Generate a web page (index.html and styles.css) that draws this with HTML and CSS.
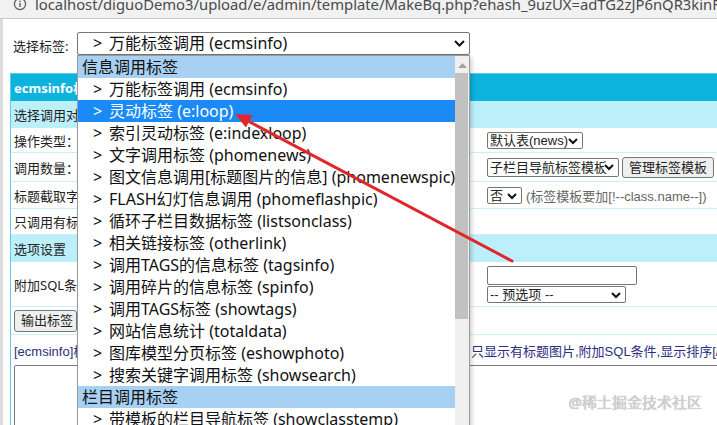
FILE: index.html
```html
<!DOCTYPE html>
<html lang="zh-CN">
<head>
    <meta charset="UTF-8">
    <title>MakeBq</title>
    <link rel="stylesheet" href="styles.css">
</head>
<body>
    <!-- barra de direcciones -->
    <div class="urlbar">
        <svg class="info" width="14" height="14" viewBox="0 0 14 14">
            <circle cx="7" cy="7" r="5.6" fill="none" stroke="#5f5f5f" stroke-width="1.3"/>
            <rect x="6.3" y="6" width="1.4" height="4" fill="#5f5f5f"/>
            <rect x="6.3" y="3.6" width="1.4" height="1.4" fill="#5f5f5f"/>
        </svg>
        <span class="url">localhost/diguoDemo3/upload/e/admin/template/MakeBq.php?ehash_9uzUX=adTG2zJP6nQR3kinF99</span>
    </div>

    <div class="page">
        <div class="picker">
            <span class="picker-label">选择标签:</span>
            <div class="select-wrap">
                <div class="select big">
                    <span class="gt">&gt;</span>万能标签调用 (ecmsinfo)
                    <svg class="chev" width="11" height="7" viewBox="0 0 11 7"><path d="M1 1l4.5 4.5L10 1" fill="none" stroke="#111" stroke-width="2"/></svg>
                </div>

                <!-- lista desplegada -->
                <div class="dropdown">
                    <div class="options">
                        <div class="group">信息调用标签</div>
                        <div class="opt"><span class="gt">&gt;</span>万能标签调用 (ecmsinfo)</div>
                        <div class="opt active"><span class="gt">&gt;</span>灵动标签 (e:loop)</div>
                        <div class="opt"><span class="gt">&gt;</span>索引灵动标签 (e:indexloop)</div>
                        <div class="opt"><span class="gt">&gt;</span>文字调用标签 (phomenews)</div>
                        <div class="opt"><span class="gt">&gt;</span>图文信息调用[标题图片的信息] (phomenewspic)</div>
                        <div class="opt"><span class="gt">&gt;</span>FLASH幻灯信息调用 (phomeflashpic)</div>
                        <div class="opt"><span class="gt">&gt;</span>循环子栏目数据标签 (listsonclass)</div>
                        <div class="opt"><span class="gt">&gt;</span>相关链接标签 (otherlink)</div>
                        <div class="opt"><span class="gt">&gt;</span>调用TAGS的信息标签 (tagsinfo)</div>
                        <div class="opt"><span class="gt">&gt;</span>调用碎片的信息标签 (spinfo)</div>
                        <div class="opt"><span class="gt">&gt;</span>调用TAGS标签 (showtags)</div>
                        <div class="opt"><span class="gt">&gt;</span>网站信息统计 (totaldata)</div>
                        <div class="opt"><span class="gt">&gt;</span>图库模型分页标签 (eshowphoto)</div>
                        <div class="opt"><span class="gt">&gt;</span>搜索关键字调用标签 (showsearch)</div>
                        <div class="group">栏目调用标签</div>
                        <div class="opt"><span class="gt">&gt;</span>带模板的栏目导航标签 (showclasstemp)</div>
                    </div>
                    <div class="scrollbar">
                        <svg class="up" width="9" height="5" viewBox="0 0 9 5"><path d="M0 5L4.5 0L9 5z" fill="#a3a3a3"/></svg>
                        <div class="thumb"></div>
                    </div>
                </div>
            </div>
        </div>

        <!-- tabla del formulario -->
        <div class="panel">
            <div class="row head"><div class="cell-l">ecmsinfo标签生成</div></div>
            <div class="row light"><div class="cell-l">选择调用对象</div></div>
            <div class="row r-type">
                <div class="cell-l">操作类型：</div>
                <div class="cell-r"><div class="select w-news">默认表(news)<svg class="chev-s" width="10" height="7" viewBox="0 0 10 7"><path d="M1 1l4 4 4-4" fill="none" stroke="#111" stroke-width="2"/></svg></div></div>
            </div>
            <div class="row r-num">
                <div class="cell-l">调用数量：</div>
                <div class="cell-r">
                    <div class="select w-temp">子栏目导航标签模板<svg class="chev-s" width="10" height="7" viewBox="0 0 10 7"><path d="M1 1l4 4 4-4" fill="none" stroke="#111" stroke-width="2"/></svg></div>
                    <button class="btn">管理标签模板</button>
                </div>
            </div>
            <div class="row r-title">
                <div class="cell-l">标题截取字数：</div>
                <div class="cell-r">
                    <div class="select w-no">否<svg class="chev-s" width="10" height="7" viewBox="0 0 10 7"><path d="M1 1l4 4 4-4" fill="none" stroke="#111" stroke-width="2"/></svg></div>
                    <span class="hint">(标签模板要加[!--class.name--])</span>
                </div>
            </div>
            <div class="row r-pic"><div class="cell-l">只调用有标题图片：</div></div>
            <div class="row light r-opt"><div class="cell-l">选项设置</div></div>
            <div class="row r-sql">
                <div class="cell-l">附加SQL条件：</div>
                <div class="cell-r stack">
                    <div class="input"></div>
                    <div class="select w-pre">-- 预选项 --<svg class="chev-s" width="10" height="7" viewBox="0 0 10 7"><path d="M1 1l4 4 4-4" fill="none" stroke="#111" stroke-width="2"/></svg></div>
                </div>
            </div>
            <div class="row r-out"><div class="cell-l"><button class="btn">输出标签</button></div></div>
            <div class="row r-code">
                <div class="code"><span class="code-hidden">[ecmsinfo]栏目ID/专题ID,显示条数,标题截取数,是否显示栏目名,操作类型,</span>只显示有标题图片,附加SQL条件,显示排序[/ecmsinfo]</div>
            </div>
            <div class="row r-area"><div class="textarea"></div></div>
        </div>
    </div>

    <!-- flecha roja -->
    <svg class="arrow" width="717" height="425" viewBox="0 0 717 425">
        <line x1="512" y1="261" x2="246" y2="120" stroke="#e0282c" stroke-width="3" stroke-linecap="round"/>
        <path d="M235 114L252.6 114.9L245.9 127.5z" fill="#e0282c"/>
    </svg>

    <div class="watermark">@稀土掘金技术社区</div>
</body>
</html>
```

FILE: styles.css
```css
html, body {
    margin: 0;
    height: 425px;
    overflow: hidden;
}

body {
    position: relative;
    background-color: #ffffff;
    font-family: "Noto Sans", "Noto Sans CJK SC", sans-serif;
    color: #111;
}

.urlbar {
    height: 18px;
    overflow: hidden;
    background-color: #f1f1f1;
    border-bottom: 1px solid #c9c9c9;
    position: relative;
    white-space: nowrap;
}

.urlbar .info {
    position: absolute;
    left: 13px;
    top: -3px;
}

.urlbar .url {
    display: block;
    margin-left: 35px;
    margin-top: -7px;
    font-size: 14.8px;
    line-height: 22px;
    color: #4a4a4a;
}

.page {
    border-left: 3px solid #dcdcdc;
    padding-left: 7px;
    height: 406px;
}

/* selector de etiqueta */
.picker {
    display: flex;
    align-items: center;
    padding-top: 13px;
    height: 23px;
}

.picker-label {
    font-size: 13px;
    margin-left: 3px;
    width: 64px;
    padding-top: 4px;
    color: #222;
    white-space: nowrap;
}

.select-wrap {
    position: relative;
}

.select {
    box-sizing: border-box;
    border: 1px solid #767676;
    border-radius: 2px;
    background: #fff;
    position: relative;
    white-space: nowrap;
    overflow: hidden;
}

.select.big {
    width: 393px;
    height: 23px;
    font-size: 16px;
    line-height: 21px;
    padding-left: 15px;
}

.gt {
    display: inline-block;
    width: 16px;
}

.chev {
    position: absolute;
    right: 4px;
    top: 7px;
}

.dropdown {
    position: absolute;
    left: 0;
    top: 23px;
    width: 393px;
    height: 380px;
    box-sizing: border-box;
    border: 1px solid #9a9a9a;
    background: #fff;
    display: flex;
    box-shadow: 2px 2px 4px rgba(0, 0, 0, 0.18);
    z-index: 5;
}

.options {
    width: 377px;
    font-size: 16px;
    white-space: nowrap;
    overflow: hidden;
}

.options .group {
    height: 22px;
    line-height: 22px;
    padding-left: 4px;
    background-color: #a7d0f2;
}

.options .opt {
    height: 22px;
    line-height: 22px;
    padding-left: 15px;
}

.options .opt.active {
    background-color: #1a8af6;
    color: #ffffff;
}

.scrollbar {
    width: 14px;
    background-color: #f0f0f0;
    position: relative;
}

.scrollbar .up {
    position: absolute;
    left: 3px;
    top: 7px;
}

.scrollbar .thumb {
    position: absolute;
    left: 0;
    right: 1px;
    top: 17px;
    height: 246px;
    background-color: #c1c1c1;
}

/* tabla */
.panel {
    margin-top: 18px;
    width: 1000px;
    border: 1px solid #5fcbe8;
    font-size: 13px;
    color: #222;
}

.row {
    display: flex;
    align-items: center;
    box-sizing: border-box;
    border-bottom: 1px solid #cdeff9;
    white-space: nowrap;
}

.cell-l {
    width: 473px;
    padding-left: 3px;
    box-sizing: border-box;
    overflow: hidden;
}

.cell-r {
    padding-left: 3px;
    display: flex;
    align-items: center;
    font-family: "Liberation Sans", "Noto Sans CJK SC", sans-serif;
}

.cell-r.stack {
    flex-direction: column;
    align-items: flex-start;
    gap: 1px;
}

.row.head {
    height: 27px;
    background-color: #0cb3dd;
    color: #ffffff;
    font-weight: bold;
    border-bottom: none;
}

.row.light {
    height: 27px;
    background-color: #bdeffb;
    border-bottom: none;
}

.r-type { height: 25px; }
.r-num { height: 29px; }
.r-title { height: 27px; }
.r-pic { height: 26px; }
.r-sql { height: 45px; }
.r-out { height: 28px; }
.r-code {
    height: 30px;
    border-bottom: none;
}
.r-area {
    height: 80px;
    align-items: flex-start;
    border-bottom: none;
}

.select.w-news,
.select.w-temp,
.select.w-no,
.select.w-pre {
    font-size: 13px;
    padding-left: 2px;
    line-height: 15px;
}

.select.w-news { width: 96px; height: 17px; }
.select.w-temp { width: 132px; height: 19px; line-height: 17px; }
.select.w-no { width: 35px; height: 17px; }
.select.w-pre { width: 139px; height: 17px; }

.chev-s {
    position: absolute;
    right: 4px;
    top: 5px;
    background: #fff;
}

.btn {
    font-family: "Liberation Sans", "Noto Sans CJK SC", sans-serif;
    font-size: 13px;
    color: #222;
    background-color: #efefef;
    border: 1px solid #767676;
    border-radius: 3px;
    height: 21px;
    padding: 0 6px;
    line-height: 17px;
    margin-left: 3px;
}

.r-out .btn {
    margin-left: 0;
    height: 22px;
    width: 63px;
}

.hint {
    color: #666;
    margin-left: 4px;
}

.input {
    width: 150px;
    height: 19px;
    box-sizing: border-box;
    border: 1px solid #767676;
    border-radius: 2px;
}

.code {
    padding-left: 3px;
    color: #2d2d80;
    font-family: "Liberation Sans", "Noto Sans CJK SC", sans-serif;
}

.code-hidden {
    display: inline-block;
    width: 457px;
    overflow: hidden;
    vertical-align: bottom;
}

.textarea {
    margin-left: 3px;
    width: 990px;
    height: 80px;
    border: 1px solid #7a7a7a;
    border-radius: 2px;
}

.arrow {
    position: absolute;
    left: 0;
    top: 0;
    pointer-events: none;
    z-index: 10;
}

.watermark {
    position: absolute;
    right: 15px;
    bottom: 13px;
    font-size: 15px;
    color: #d2d2d2;
    text-shadow: 0 0 1px #9a9a9a;
    z-index: 11;
}
```
